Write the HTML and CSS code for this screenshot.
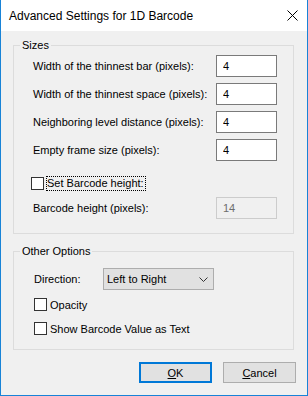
FILE: index.html
```html
<!DOCTYPE html>
<html lang="en">
<head>
    <meta charset="UTF-8">
    <meta name="viewport" content="width=device-width, initial-scale=1.0">
    <title>Advanced Settings for 1D Barcode</title>
    <link rel="stylesheet" href="styles.css">
</head>
<body>
    <div class="window">
        <div class="titlebar">
            <span class="title">Advanced Settings for 1D Barcode</span>
            <svg class="close" width="11" height="11" viewBox="0 0 11 11">
                <path d="M0.5 0.5L10.5 10.5M10.5 0.5L0.5 10.5" stroke="#000" stroke-width="1" fill="none"/>
            </svg>
        </div>

        <div class="content">
            <fieldset class="group">
                <legend>Sizes</legend>
                <div class="group-body sizes-body">
                    <div class="field-row">
                        <label for="bar">Width of the thinnest bar (pixels):</label>
                        <input type="text" id="bar" class="num" value="4">
                    </div>
                    <div class="field-row">
                        <label for="space">Width of the thinnest space (pixels):</label>
                        <input type="text" id="space" class="num" value="4">
                    </div>
                    <div class="field-row">
                        <label for="level">Neighboring level distance (pixels):</label>
                        <input type="text" id="level" class="num" value="4">
                    </div>
                    <div class="field-row">
                        <label for="frame">Empty frame size (pixels):</label>
                        <input type="text" id="frame" class="num" value="4">
                    </div>
                    <div class="check-row set-height">
                        <span class="box"></span>
                        <span class="focus">Set Barcode height:</span>
                    </div>
                    <div class="field-row">
                        <label for="height">Barcode height (pixels):</label>
                        <input type="text" id="height" class="num" value="14" disabled>
                    </div>
                </div>
            </fieldset>

            <fieldset class="group other">
                <legend>Other Options</legend>
                <div class="group-body other-body">
                    <div class="direction-row">
                        <span class="dir-label">Direction:</span>
                        <div class="select">
                            <span>Left to Right</span>
                            <svg width="9" height="5" viewBox="0 0 9 5">
                                <path d="M0.5 0.5L4.5 4.5L8.5 0.5" stroke="#333" stroke-width="1" fill="none"/>
                            </svg>
                        </div>
                    </div>
                    <div class="check-row opacity-row">
                        <span class="box"></span>
                        <span>Opacity</span>
                    </div>
                    <div class="check-row show-row">
                        <span class="box"></span>
                        <span>Show Barcode Value as Text</span>
                    </div>
                </div>
            </fieldset>

            <div class="buttons">
                <button class="btn default"><u>O</u>K</button>
                <button class="btn"><u>C</u>ancel</button>
            </div>
        </div>
    </div>
</body>
</html>
```

FILE: styles.css
```css
body {
    margin: 0;
    font-family: "Liberation Sans", Arial, sans-serif;
    font-size: 11px;
    color: #000;
    background: #fff;
}
.window {
    width: 308px;
    height: 396px;
    box-sizing: border-box;
    border: 1px solid #1883d7;
    border-top: none;
    display: flex;
    flex-direction: column;
}
.titlebar {
    height: 31px;
    flex-shrink: 0;
    display: flex;
    align-items: center;
    padding: 0 9px 0 8px;
    background: #fff;
}
.title {
    font-size: 12px;
}
.close {
    margin-left: auto;
}
.content {
    flex: 1;
    background: #f0f0f0;
    padding: 6px 13px 0 12px;
}
.group {
    margin: 0;
    padding: 0;
    border: 1px solid #dcdcdc;
    min-width: 0;
}
.group legend {
    margin-left: 6px;
    padding: 0 2px;
    line-height: 16px;
}
.sizes-body {
    padding: 2px 16px 14px 19px;
}
.field-row {
    height: 22px;
    display: flex;
    align-items: center;
    justify-content: space-between;
    margin-bottom: 6px;
    white-space: nowrap;
}
.field-row:last-child {
    margin-bottom: 0;
}
.num {
    width: 61px;
    height: 22px;
    box-sizing: border-box;
    border: 1px solid #7a7a7a;
    background: #fff;
    padding: 0 6px;
    font-family: inherit;
    font-size: 11px;
    color: #000;
    outline: none;
}
.num:disabled {
    border-color: #cccccc;
    background: #f0f0f0;
    color: #6d6d6d;
}
.check-row {
    display: flex;
    align-items: center;
    white-space: nowrap;
}
.box {
    width: 13px;
    height: 13px;
    box-sizing: border-box;
    border: 1px solid #333;
    background: #fff;
    flex-shrink: 0;
}
.set-height {
    height: 15px;
    margin: 15px 0 6px -2px;
}
.focus {
    margin-left: 2px;
    border: 1px dotted #000;
    line-height: 13px;
    padding: 0 1px 0 0;
}
.other {
    margin-top: 9px;
}
.other-body {
    padding: 9px 16px 12px 20px;
}
.direction-row {
    display: flex;
    align-items: center;
    height: 22px;
}
.dir-label {
    width: 69px;
    flex-shrink: 0;
}
.select {
    width: 111px;
    height: 22px;
    box-sizing: border-box;
    border: 1px solid #adadad;
    background: #e1e1e1;
    display: flex;
    align-items: center;
    justify-content: space-between;
    padding: 0 5px 0 3px;
}
.opacity-row {
    height: 17px;
    margin-top: 6px;
}
.show-row {
    height: 17px;
    margin-top: 7px;
}
.opacity-row .box,
.show-row .box {
    margin-right: 3px;
}
.buttons {
    display: flex;
    justify-content: flex-end;
    gap: 11px;
    margin: 12px -2px 0 0;
}
.btn {
    width: 73px;
    height: 21px;
    box-sizing: border-box;
    border: 1px solid #adadad;
    background: #e1e1e1;
    font-family: inherit;
    font-size: 11px;
    color: #000;
    padding: 0;
}
.btn.default {
    border: 2px solid #0078d7;
}
```
